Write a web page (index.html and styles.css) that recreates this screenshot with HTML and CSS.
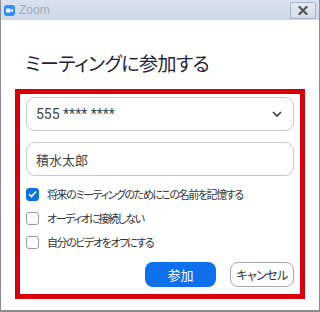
FILE: index.html
```html
<!DOCTYPE html>
<html lang="ja">
<head>
    <meta charset="UTF-8">
    <title>Zoom</title>
    <link rel="stylesheet" href="styles.css">
</head>
<body>

<div class="window">
    <div class="titlebar">
        <span class="app-icon">
            <svg width="11" height="11" viewBox="0 0 11 11">
                <rect x="0" y="0" width="11" height="11" rx="3" fill="#2d8cff"/>
                <rect x="2" y="3.5" width="4.6" height="4" rx="0.8" fill="#fff"/>
                <path d="M7 5 L9 3.8 V7.2 L7 6 Z" fill="#fff"/>
            </svg>
        </span>
        <span class="app-name">Zoom</span>
        <button class="close-btn" type="button">
            <svg width="10" height="9" viewBox="0 0 10 9">
                <path d="M1.5 1 L8.5 8 M8.5 1 L1.5 8" stroke="#555" stroke-width="2.2" stroke-linecap="square"/>
            </svg>
        </button>
    </div>

    <div class="content">
        <h1 class="heading">ミーティングに参加する</h1>

        <div class="highlight">
            <div class="field select">
                <span>555 **** ****</span>
                <svg class="chevron" width="10" height="6" viewBox="0 0 10 6">
                    <path d="M1 1 L5 5 L9 1" fill="none" stroke="#333" stroke-width="1.5"/>
                </svg>
            </div>
            <div class="field">
                <span>積水太郎</span>
            </div>

            <div class="options">
                <label class="option">
                    <span class="check checked">
                        <svg width="9" height="8" viewBox="0 0 9 8">
                            <path d="M1 4 L3.5 6.5 L8 1.5" fill="none" stroke="#fff" stroke-width="1.6"/>
                        </svg>
                    </span>
                    将来のミーティングのためにこの名前を記憶する
                </label>
                <label class="option">
                    <span class="check"></span>
                    オーディオに接続しない
                </label>
                <label class="option">
                    <span class="check"></span>
                    自分のビデオをオフにする
                </label>
            </div>

            <div class="actions">
                <button class="btn btn-primary" type="button">参加</button>
                <button class="btn btn-secondary" type="button">キャンセル</button>
            </div>
        </div>
    </div>
</div>

</body>
</html>
```

FILE: styles.css
```css
* {
    box-sizing: border-box;
}
body {
    margin: 0;
    width: 320px;
    height: 312px;
    font-family: "Noto Sans CJK JP", "Noto Sans", sans-serif;
    font-feature-settings: "palt";
    background-color: #fff;
}
.window {
    width: 320px;
    height: 312px;
    border: 1px solid #8a8d92;
    border-top: none;
    border-bottom-width: 2px;
    display: flex;
    flex-direction: column;
}
.titlebar {
    height: 20px;
    display: flex;
    align-items: center;
    padding-left: 3px;
    background: linear-gradient(#d9e3ef, #cdd9e7);
}
.app-icon {
    display: flex;
    margin-right: 4px;
}
.app-name {
    font-family: "Liberation Sans", Arial, sans-serif;
    font-size: 12px;
    color: #a0a8b2;
}
.close-btn {
    margin-left: auto;
    margin-right: 3px;
    width: 26px;
    height: 17px;
    padding: 0;
    border: 1px solid #a9b4c2;
    border-radius: 2px;
    background: linear-gradient(#e4ebf3, #d3dce8);
    display: flex;
    align-items: center;
    justify-content: center;
}
.content {
    flex: 1;
    padding: 0 14px 0 14px;
}
.heading {
    margin: 29px 0 0 10px;
    height: 39px;
    font-size: 19px;
    font-weight: normal;
    letter-spacing: -0.5px;
    color: #232333;
}
.highlight {
    margin-top: 1px;
    height: 210px;
    border: 5px solid #d9000b;
    padding: 3px 6px 0 6px;
}
.field {
    height: 34px;
    border: 1px solid #c7c7d1;
    border-radius: 9px;
    display: flex;
    align-items: center;
    padding: 0 10px 0 9px;
    font-size: 13px;
    color: #444;
    margin-bottom: 11px;
}
.select {
    justify-content: space-between;
    font-family: Roboto, "Noto Sans", sans-serif;
    font-size: 14px;
}
.chevron {
    margin-right: 1px;
}
.options {
    margin-top: 1px;
    display: flex;
    flex-direction: column;
    gap: 10px;
}
.option {
    display: flex;
    align-items: center;
    height: 14px;
    font-size: 11px;
    letter-spacing: -1.4px;
    color: #333;
    white-space: nowrap;
}
.check {
    width: 13px;
    height: 13px;
    margin-right: 8px;
    border: 1px solid #9a9aa6;
    border-radius: 3px;
    display: flex;
    align-items: center;
    justify-content: center;
    flex-shrink: 0;
}
.check.checked {
    background-color: #0e71eb;
    border-color: #0e71eb;
}
.actions {
    margin-top: 13px;
    display: flex;
    justify-content: flex-end;
    gap: 14px;
}
.btn {
    height: 25px;
    border-radius: 8px;
    font-family: "Noto Sans CJK JP", sans-serif;
    font-feature-settings: "palt";
    font-size: 13px;
    padding: 0;
    white-space: nowrap;
}
.btn-primary {
    width: 71px;
    background-color: #0e71eb;
    border: none;
    color: #fff;
}
.btn-secondary {
    width: 64px;
    background-color: #fff;
    border: 1px solid #a7a7b0;
    color: #333;
    font-size: 12px;
    letter-spacing: -0.6px;
}
```
